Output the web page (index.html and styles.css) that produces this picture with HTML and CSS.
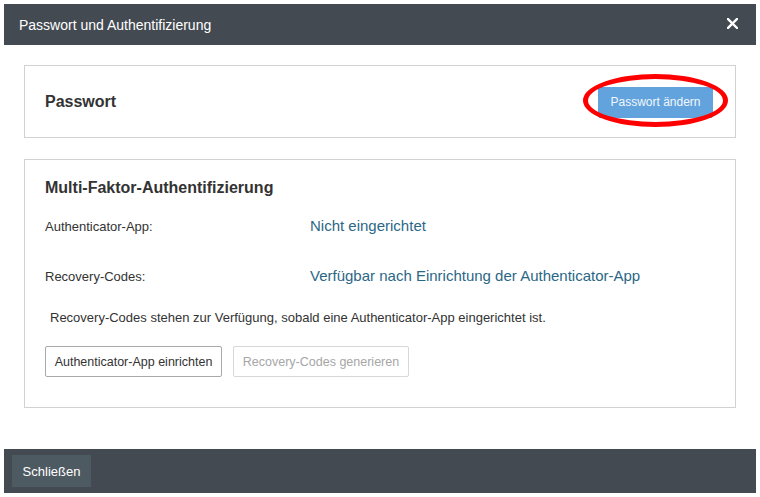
FILE: index.html
```html
<!DOCTYPE html>
<html lang="de">
<head>
<meta charset="utf-8">
<title>Passwort und Authentifizierung</title>
<link rel="stylesheet" href="styles.css">
</head>
<body>
<div class="dialog">
  <div class="dialog-header">
    <span class="dialog-title">Passwort und Authentifizierung</span>
    <button class="close-btn" aria-label="Schließen">
      <svg width="11" height="11" viewBox="0 0 11 11"><path d="M1 1 L10 10 M10 1 L1 10" stroke="#fff" stroke-width="2.4" stroke-linecap="square"/></svg>
    </button>
  </div>
  <div class="dialog-body">
    <section class="panel panel-password">
      <h2 class="panel-title">Passwort</h2>
      <div class="highlight-wrap">
        <button class="btn btn-primary">Passwort ändern</button>
        <span class="highlight-ring"></span>
      </div>
    </section>
    <section class="panel panel-mfa">
      <h2 class="panel-title">Multi-Faktor-Authentifizierung</h2>
      <div class="info-grid">
        <div class="info-label">Authenticator-App:</div>
        <div class="info-value">Nicht eingerichtet</div>
        <div class="info-label">Recovery-Codes:</div>
        <div class="info-value">Verfügbar nach Einrichtung der Authenticator-App</div>
      </div>
      <p class="note">Recovery-Codes stehen zur Verfügung, sobald eine Authenticator-App eingerichtet ist.</p>
      <div class="actions">
        <button class="btn btn-outline">Authenticator-App einrichten</button>
        <button class="btn btn-disabled" disabled>Recovery-Codes generieren</button>
      </div>
    </section>
  </div>
  <div class="dialog-footer">
    <button class="btn btn-dark">Schließen</button>
  </div>
</div>
</body>
</html>
```
FILE: styles.css
```css
* { box-sizing: border-box; }
html, body { margin: 0; padding: 0; background: #fff; }
body {
  font-family: "Liberation Sans", Arial, sans-serif;
  color: #333;
  padding: 4px;
}
.dialog {
  width: 752px;
  height: 489px;
  display: flex;
  flex-direction: column;
  background: #fff;
}
.dialog-header {
  height: 41px;
  background: #434a52;
  display: flex;
  align-items: center;
  justify-content: space-between;
  padding: 0 18px 0 15px;
}
.dialog-title {
  color: #fff;
  font-size: 14px;
}
.close-btn {
  background: none;
  border: 0;
  padding: 0;
  display: flex;
  cursor: pointer;
  margin-top: -2px;
}
.dialog-body {
  flex: 1;
  padding: 20px 20px 0 20px;
  display: flex;
  flex-direction: column;
  gap: 21px;
}
.panel {
  border: 1px solid #d2d2d2;
  background: #fff;
}
.panel-title {
  margin: 0;
  font-size: 16px;
  font-weight: bold;
  color: #333;
}
.panel-password {
  height: 73px;
  display: flex;
  align-items: center;
  justify-content: space-between;
  padding: 0 22px 0 20px;
}
.highlight-wrap {
  position: relative;
  display: flex;
  margin-top: 1px;
}
.highlight-ring {
  position: absolute;
  left: -15px;
  top: -13px;
  width: 145px;
  height: 53px;
  border: 5px solid #f00;
  border-radius: 50%;
  pointer-events: none;
}
.btn {
  font-family: "Liberation Sans", Arial, sans-serif;
  font-size: 12px;
  height: 31px;
  padding: 0;
  border-radius: 2px;
  white-space: nowrap;
  text-align: center;
  cursor: pointer;
}
.btn-primary {
  width: 115px;
  background: #62a3dd;
  border: 1px solid #62a3dd;
  color: #f2f6fb;
}
.panel-mfa {
  height: 249px;
  padding: 19px 20px 0 20px;
}
.info-grid {
  display: grid;
  grid-template-columns: 265px 1fr;
  row-gap: 31px;
  margin-top: 20px;
  align-items: baseline;
}
.info-label {
  font-size: 13px;
  color: #333;
  line-height: 18px;
}
.info-value {
  font-size: 15px;
  color: #2b6786;
  line-height: 18px;
}
.note {
  margin: 23px 0 0 5px;
  font-size: 13px;
  line-height: 18px;
  color: #333;
}
.actions {
  display: flex;
  gap: 11px;
  margin-top: 19px;
}
.btn-outline {
  width: 177px;
  font-size: 12.5px;
  background: #fff;
  border: 1px solid #a9a9a9;
  color: #333;
}
.btn-disabled {
  width: 176px;
  font-size: 12.5px;
  background: #fff;
  border: 1px solid #d8d8d8;
  color: #a6a6a6;
  cursor: default;
}
.dialog-footer {
  height: 44px;
  margin-top: auto;
  background: #434a52;
  display: flex;
  align-items: center;
  padding: 0 8px;
}
.btn-dark {
  width: 79px;
  height: 32px;
  background: #4e5a62;
  border: 0;
  border-radius: 0;
  color: #fff;
  font-size: 13px;
}
```
